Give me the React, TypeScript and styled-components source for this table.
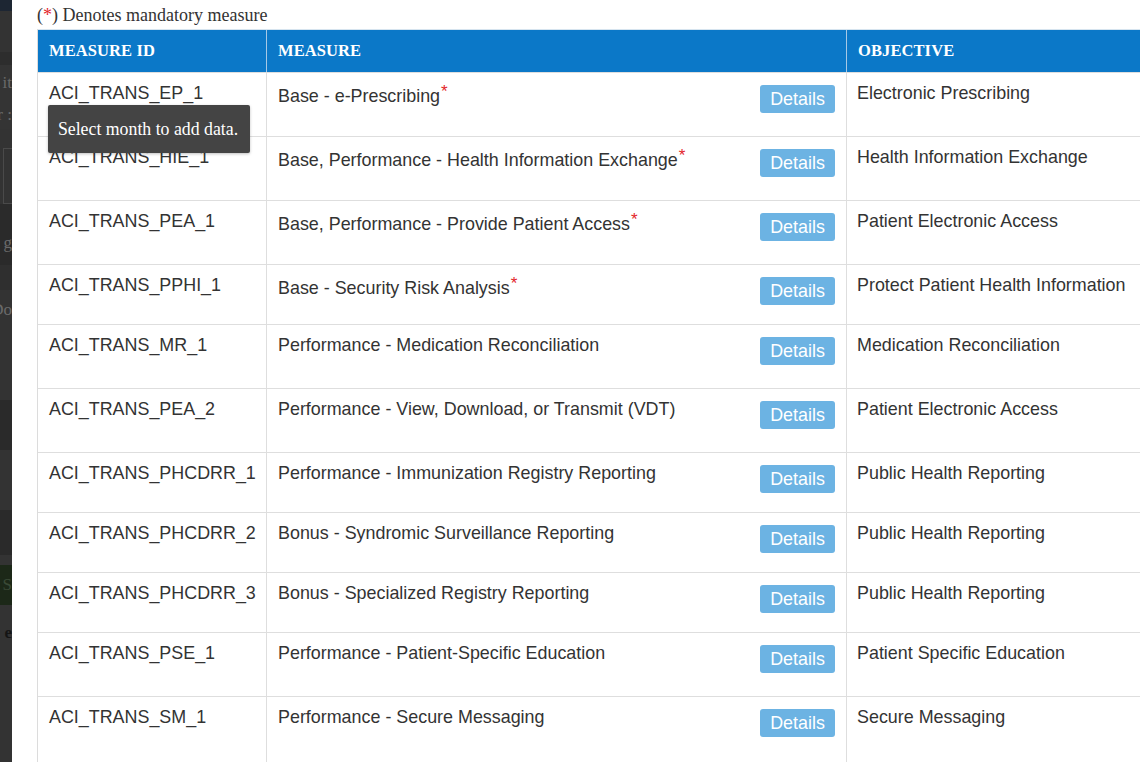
import React from 'react';
import styled, { createGlobalStyle } from 'styled-components';

const Global = createGlobalStyle`
  html, body { margin: 0; padding: 0; background: #fff; overflow: hidden; }
  #root { width: 1140px; height: 762px; }
`;

const Page = styled.div`
  display: flex;
  width: 1140px;
  height: 762px;
  overflow: hidden;
`;

const Backdrop = styled.div`
  width: 12px;
  flex: none;
  display: flex;
  flex-direction: column;
  background: #333;
  overflow: hidden;
`;

const Band = styled.div<{ $h: number; $bg?: string; $color?: string; $bold?: boolean; $frame?: boolean }>`
  height: ${(p) => p.$h}px;
  flex: none;
  background: ${(p) => p.$bg || '#333'};
  display: flex;
  justify-content: flex-end;
  align-items: center;
  overflow: hidden;
  white-space: nowrap;
  font-family: 'Liberation Serif', serif;
  font-size: 17px;
  font-weight: ${(p) => (p.$bold ? 700 : 400)};
  color: ${(p) => p.$color || '#6a6a6a'};
  box-sizing: border-box;
  ${(p) => (p.$frame ? 'border-left: 1px solid #4a4a4a; margin-left: 3px; border-top: 1px solid #4a4a4a; border-bottom: 1px solid #4a4a4a;' : '')}
`;

const Panel = styled.div`
  flex: 1;
  background: #fff;
  padding-left: 25px;
  overflow: hidden;
`;

const Note = styled.div`
  height: 26px;
  padding-top: 4px;
  box-sizing: border-box;
  margin-bottom: 3px;
  font-family: 'Liberation Serif', serif;
  font-size: 18px;
  line-height: 22px;
  color: #333;
  white-space: nowrap;
`;

const Red = styled.span`
  color: #e3262b;
`;

const Table = styled.div`
  width: 1160px;
  border-left: 1px solid #dcdcdc;
`;

const Cols = `grid-template-columns: 228px 580px 351px;`;

const HeadRow = styled.div`
  display: grid;
  ${Cols}
  height: 43px;
  background: #0b78c8;
  border-top: 1px solid #d6e4ef;
  box-sizing: border-box;
`;

const HeadCell = styled.div<{ $first?: boolean }>`
  display: flex;
  align-items: center;
  padding-left: 11px;
  border-left: ${(p) => (p.$first ? 'none' : '1px solid #a6c9e6')};
  font-family: 'Liberation Serif', serif;
  font-weight: 700;
  font-size: 16.5px;
  color: #fff;
  text-transform: uppercase;
  letter-spacing: 0.1px;
`;

const Row = styled.div<{ $h: number }>`
  display: grid;
  ${Cols}
  height: ${(p) => p.$h}px;
  border-top: 1px solid #dedede;
  box-sizing: border-box;
`;

const Cell = styled.div<{ $first?: boolean }>`
  position: relative;
  padding: 10px 11px 0 ${(p) => (p.$first ? 11 : 10)}px;
  border-left: ${(p) => (p.$first ? 'none' : '1px solid #dedede')};
  font-family: 'Liberation Sans', Arial, sans-serif;
  font-size: 17.9px;
  line-height: 21px;
  color: #333;
  white-space: nowrap;
`;

const MeasureCell = styled(Cell)`
  display: flex;
  justify-content: space-between;
  align-items: flex-start;
  padding-left: 11px;
  padding-right: 11px;
`;

const MeasureText = styled.span`
  line-height: 21px;
`;

const Star = styled.sup`
  color: #e3262b;
  font-size: 17px;
  line-height: 17px;
  vertical-align: 5px;
  margin-left: 1px;
`;

const DetailsButton = styled.button`
  margin-top: 2px;
  width: 75px;
  height: 28px;
  border: none;
  border-radius: 3px;
  background: #6cb3e3;
  color: #fff;
  font-family: 'Liberation Sans', Arial, sans-serif;
  font-size: 17.9px;
  line-height: 28px;
  padding: 0;
  cursor: pointer;
`;

const Tooltip = styled.div`
  position: absolute;
  left: 10px;
  top: 32px;
  width: 202px;
  height: 48px;
  box-sizing: border-box;
  padding-right: 2px;
  background: #444;
  border-radius: 2px;
  color: #fff;
  font-family: 'Liberation Serif', serif;
  font-size: 17.8px;
  display: flex;
  align-items: center;
  justify-content: center;
  z-index: 5;
  box-shadow: 0 1px 3px rgba(0, 0, 0, 0.25);
`;

type Item = { id: string; measure: string; star?: boolean; objective: string; h: number };

const rows: Item[] = [
  { id: 'ACI_TRANS_EP_1', measure: 'Base - e-Prescribing', star: true, objective: 'Electronic Prescribing', h: 64 },
  { id: 'ACI_TRANS_HIE_1', measure: 'Base, Performance - Health Information Exchange', star: true, objective: 'Health Information Exchange', h: 64 },
  { id: 'ACI_TRANS_PEA_1', measure: 'Base, Performance - Provide Patient Access', star: true, objective: 'Patient Electronic Access', h: 64 },
  { id: 'ACI_TRANS_PPHI_1', measure: 'Base - Security Risk Analysis', star: true, objective: 'Protect Patient Health Information', h: 60 },
  { id: 'ACI_TRANS_MR_1', measure: 'Performance - Medication Reconciliation', objective: 'Medication Reconciliation', h: 64 },
  { id: 'ACI_TRANS_PEA_2', measure: 'Performance - View, Download, or Transmit (VDT)', objective: 'Patient Electronic Access', h: 64 },
  { id: 'ACI_TRANS_PHCDRR_1', measure: 'Performance - Immunization Registry Reporting', objective: 'Public Health Reporting', h: 60 },
  { id: 'ACI_TRANS_PHCDRR_2', measure: 'Bonus - Syndromic Surveillance Reporting', objective: 'Public Health Reporting', h: 60 },
  { id: 'ACI_TRANS_PHCDRR_3', measure: 'Bonus - Specialized Registry Reporting', objective: 'Public Health Reporting', h: 60 },
  { id: 'ACI_TRANS_PSE_1', measure: 'Performance - Patient-Specific Education', objective: 'Patient Specific Education', h: 64 },
  { id: 'ACI_TRANS_SM_1', measure: 'Performance - Secure Messaging', objective: 'Secure Messaging', h: 70 },
];

export default function App() {
  return (
    <>
      <Global />
      <Page>
        <Backdrop>
          <Band $h={11} $bg="#1d2633" />
          <Band $h={41} $bg="#333" />
          <Band $h={13} $bg="#2d2d2d" />
          <Band $h={36} $bg="#343434">it</Band>
          <Band $h={28} $bg="#343434">r :</Band>
          <Band $h={19} $bg="#333" />
          <Band $h={56} $bg="#333" $frame />
          <Band $h={16} $bg="#2b2b2b" />
          <Band $h={45} $bg="#2a2a2a">g</Band>
          <Band $h={25} $bg="#2f2f2f" />
          <Band $h={40} $bg="#333">Do</Band>
          <Band $h={70} $bg="#333" />
          <Band $h={50} $bg="#2a2a2a" />
          <Band $h={60} $bg="#333" />
          <Band $h={45} $bg="#2a2a2a" />
          <Band $h={10} $bg="#333" />
          <Band $h={40} $bg="#1c2818" $color="#3a4a36">S</Band>
          <Band $h={13} $bg="#333" />
          <Band $h={30} $bg="#333" $color="#151515" $bold>e</Band>
          <Band $h={120} $bg="#333" />
        </Backdrop>
        <Panel>
          <Note>
            (<Red>*</Red>) Denotes mandatory measure
          </Note>
          <Table>
            <HeadRow>
              <HeadCell $first>Measure ID</HeadCell>
              <HeadCell>Measure</HeadCell>
              <HeadCell>Objective</HeadCell>
            </HeadRow>
            {rows.map((r, i) => (
              <Row key={r.id} $h={r.h}>
                <Cell $first>
                  {r.id}
                  {i === 0 && <Tooltip>Select month to add data.</Tooltip>}
                </Cell>
                <MeasureCell>
                  <MeasureText>
                    {r.measure}
                    {r.star && <Star>*</Star>}
                  </MeasureText>
                  <DetailsButton>Details</DetailsButton>
                </MeasureCell>
                <Cell>{r.objective}</Cell>
              </Row>
            ))}
          </Table>
        </Panel>
      </Page>
    </>
  );
}
